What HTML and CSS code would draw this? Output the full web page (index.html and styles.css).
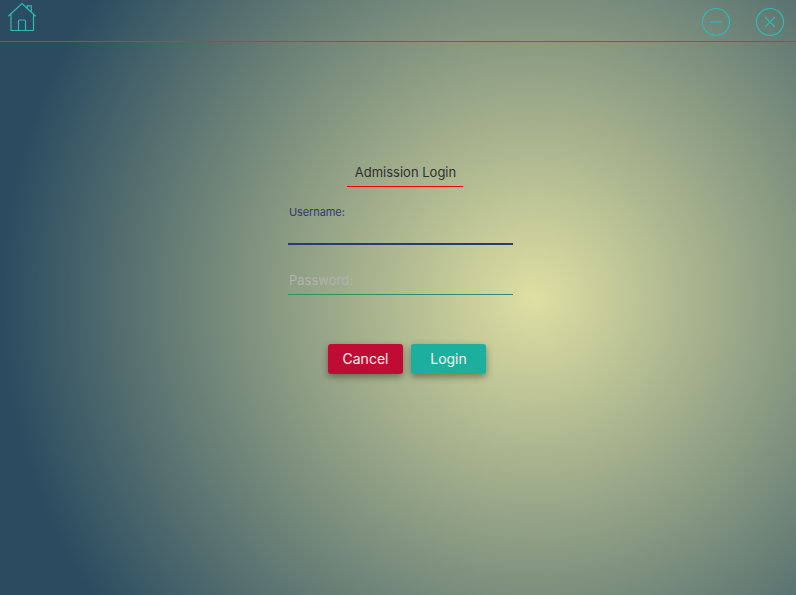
FILE: index.html
```html
<!DOCTYPE html>
<html lang="en">
<head>
<meta charset="utf-8">
<title>Admission Login</title>
<link rel="stylesheet" href="styles.css">
</head>
<body>
<header class="bar">
  <svg class="home" width="30" height="32" viewBox="0 0 30 32"><path d="M1.300 14.300 15 1.500l13.700 12.800M4 12.500v16h22.500v-16M11.500 28.500v-9.500q0-1 1-1h5q1 0 1 1v9.500M20.300 6V3.800h4v6"/></svg>
  <div class="controls">
    <svg width="30" height="30" viewBox="0 0 30 30"><circle cx="15" cy="15" r="13.500"/><path class="dash" d="M9 15h12.500"/></svg>
    <svg width="30" height="30" viewBox="0 0 30 30"><circle cx="15" cy="15" r="13.500"/><path d="m10 10 10 10M20 10 10 20"/></svg>
  </div>
</header>
<main class="login">
  <h1>Admission Login</h1>
  <div class="field active">Username:</div>
  <div class="field">Password:</div>
  <div class="actions"><button class="cancel">Cancel</button><button>Login</button></div>
</main>
</body>
</html>
```

FILE: styles.css
```css
* { box-sizing: border-box; }
body {
  margin: 0;
  height: 595px;
  overflow: hidden;
  font-family: Inter, sans-serif;
  background: radial-gradient(circle 535px at 534px 298px, #dedfa2 0, #7d907e 55%, #2a4b60 100%);
}
.bar {
  height: 42px;
  border-bottom: 1px solid #346bb4;
  display: flex;
  justify-content: space-between;
  padding: 2px 11px 0 7px;
}
svg { display: block; fill: none; stroke: #30b9b4; stroke-width: 1.2; }
.controls { display: flex; gap: 24px; padding-top: 5px; }
.dash { stroke-width: 1.6; opacity: .8; }
.login { width: 225px; margin-left: 288px; padding-top: 117px; }
h1 {
  width: 116px;
  height: 28px;
  margin: 0 0 0 59px;
  padding-left: 1px;
  border-bottom: 1px solid #f00000;
  font-size: 13px;
  font-weight: 400;
  line-height: 27px;
  text-align: center;
  color: #303030;
}
.field {
  height: 31px;
  margin-top: 19px;
  padding-left: 1px;
  border-bottom: 1px solid #408763;
  font-size: 13px;
  line-height: 33px;
  color: #b0b2b0;
}
.active {
  height: 40px;
  margin-top: 18px;
  border-bottom: 2px solid #293c72;
  font-size: 11px;
  letter-spacing: -.1px;
  line-height: 15px;
  color: #2b3b70;
}
.actions { display: flex; gap: 8px; margin: 49px 0 0 40px; }
button {
  width: 75px;
  height: 30px;
  padding: 0;
  border: 0;
  border-radius: 3px;
  background: #1daf9d;
  box-shadow: 0 3px 7px rgba(0, 0, 0, .38);
  color: #f4f4ee;
  font: 14px/30px Inter, sans-serif;
}
.cancel { background: #c00c35; }
```
